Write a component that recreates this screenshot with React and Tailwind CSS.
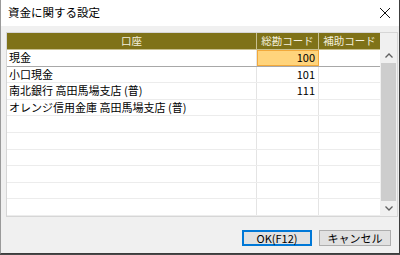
import React from 'react';

const rows = [
  { name: '現金', code: '100', sub: '' },
  { name: '小口現金', code: '101', sub: '' },
  { name: '南北銀行 高田馬場支店 (普)', code: '111', sub: '' },
  { name: 'オレンジ信用金庫 高田馬場支店 (普)', code: '', sub: '' },
  { name: '', code: '', sub: '' },
  { name: '', code: '', sub: '' },
  { name: '', code: '', sub: '' },
  { name: '', code: '', sub: '' },
  { name: '', code: '', sub: '' },
  { name: '', code: '', sub: '' },
];

const font = { fontFamily: '"Noto Sans CJK JP", "Noto Sans", sans-serif' };

export default function App() {
  return (
    <div className="w-[400px] h-[255px] bg-[#4a4a4a] overflow-hidden" style={font}>
      <div className="w-[400px] h-[254px] flex flex-col border-l border-l-[#9a9a9a] border-r border-r-[#3c3c3c] border-b border-b-[#3c3c3c] bg-[#f0f0f0]">

        {/* Title bar */}
        <div className="h-[26px] bg-white flex items-center justify-between pl-[7px] pr-[6px]">
          <span className="text-[11.5px] leading-none text-black">資金に関する設定</span>
          <svg width="12" height="12" viewBox="0 0 12 12" className="mr-[2px]">
            <path d="M1 1 L11 11 M11 1 L1 11" stroke="#111" strokeWidth="1" />
          </svg>
        </div>

        {/* Grid */}
        <div className="mt-[6px] ml-[5px] w-[392px] h-[185px] border border-[#d6d6d6] bg-white flex">
          <div className="flex flex-col w-[373px]">
            <div className="h-[17px] flex bg-[#7f7218] text-[10.5px] leading-none text-[#f4f0dc] border-b border-[#c8c090]">
              <div className="w-[250px] flex items-center justify-center border-r border-[#c8c090]">口座</div>
              <div className="w-[62px] flex items-center justify-center border-r border-[#c8c090]">総勘コード</div>
              <div className="w-[61px] flex items-center justify-center">補助コード</div>
            </div>
            <div className="flex-1 flex flex-col">
              {rows.map((r, i) => (
                <div key={i}
                  className={`flex-1 flex text-[11px] leading-none text-black border-b ${i === 0 ? 'border-[#a8a8a8]' : 'border-[#ececec]'}`}>
                  <div className="w-[250px] flex items-center pl-[2px] border-r border-[#e4e4e4] whitespace-nowrap">{r.name}</div>
                  {i === 0 ? (
                    <div className="w-[62px] flex items-center justify-end pr-[3px] bg-[#ffd47c] border border-[#f2a93b]">{r.code}</div>
                  ) : (
                    <div className="w-[62px] flex items-center justify-end pr-[3px] border-r border-[#e4e4e4]">{r.code}</div>
                  )}
                  <div className="w-[61px] flex items-center">{r.sub}</div>
                </div>
              ))}
            </div>
          </div>

          {/* Scrollbar */}
          <div className="w-[17px] bg-[#f0f0f0] flex flex-col items-center">
            <div className="h-[30px] w-full flex items-end justify-center pb-[5px]">
              <svg width="8" height="5" viewBox="0 0 8 5">
                <path d="M0.5 4.5 L4 1 L7.5 4.5" stroke="#606060" strokeWidth="1.3" fill="none" />
              </svg>
            </div>
            <div className="w-[15px] h-[138px] bg-[#cdcdcd]" />
            <div className="flex-1 w-full flex items-center justify-center">
              <svg width="8" height="5" viewBox="0 0 8 5">
                <path d="M0.5 0.5 L4 4 L7.5 0.5" stroke="#606060" strokeWidth="1.3" fill="none" />
              </svg>
            </div>
          </div>
        </div>

        {/* Buttons */}
        <div className="flex justify-end gap-[7px] mt-[13px] pr-[8px]">
          <button className="w-[70px] h-[16px] bg-[#e1e1e1] border-2 border-[#0078d7] text-[11px] leading-none text-black flex items-center justify-center">
            OK(F12)
          </button>
          <button className="w-[72px] h-[16px] bg-[#e1e1e1] border border-[#adadad] text-[11px] leading-none text-black flex items-center justify-center">
            キャンセル
          </button>
        </div>
      </div>
    </div>
  );
}
